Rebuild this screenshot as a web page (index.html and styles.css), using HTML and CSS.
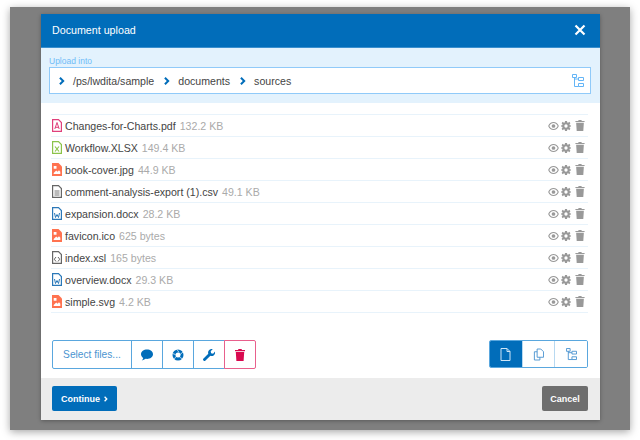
FILE: index.html
```html
<!DOCTYPE html>
<html lang="en">
<head>
    <meta charset="UTF-8">
    <title>Document upload</title>
    <link rel="stylesheet" href="styles.css">
</head>
<body>
    <svg class="sprites" width="0" height="0" aria-hidden="true">
        <defs>
            <symbol id="eye" viewBox="0 0 12 9"><path fill-rule="evenodd" d="M6 0C3.300 0 1.100 1.800 0 4.500 1.100 7.200 3.300 9 6 9s4.900-1.800 6-4.500C10.900 1.800 8.700 0 6 0zm0 1.200c1.900 0 3.700 1.300 4.700 3.300-1 2-2.800 3.300-4.700 3.300S2.300 6.500 1.300 4.500c1-2 2.800-3.300 4.700-3.300zM6 2.400a2.100 2.100 0 1 0 0 4.200 2.100 2.100 0 0 0 0-4.200z"/></symbol>
            <symbol id="gear" viewBox="0 0 12 12"><path fill-rule="evenodd" d="M4.800 0h2.400l.3 1.700 1 .4L10 1l1.300 1.700-1.100 1.300.3 1 1.500.3v1.400l-1.500.3-.3 1 1.100 1.300L10 11l-1.500-1.100-1 .4-.3 1.700H4.800l-.3-1.700-1-.4L2 11 .7 9.300 1.800 8l-.3-1L0 6.700V5.300L1.500 5l.3-1L.7 2.700 2 1l1.500 1.100 1-.4zM6 4a2 2 0 1 0 0 4 2 2 0 0 0 0-4z"/></symbol>
            <symbol id="trash" viewBox="0 0 10 12"><path d="M3.500 0h3l.5 1h3v1.300H0V1h3zM.8 3h8.400l-.6 9H1.400z"/></symbol>
            <symbol id="chev" viewBox="0 0 6 8"><path d="M1.600 0 5.600 4l-4 4L.2 6.600 2.800 4 .2 1.400z"/></symbol>
            <symbol id="tree" viewBox="0 0 12 14"><path fill="none" stroke="currentColor" d="M.5.500h4v3h-4zM6.500 3.500h5v3h-5zM6.500 9.500h5v3h-5zM2.500 3.500v9h4M2.500 5h4"/></symbol>
            <symbol id="file" viewBox="0 0 11 13"><path d="M1 .5h6l3 3v9H1z" fill="none" stroke="currentColor"/><path d="M7 .5v3h3" fill="none" stroke="currentColor"/></symbol>
            <symbol id="file-img" viewBox="0 0 10 13"><path d="M0 0h6.500L10 3.500V13H0z"/><path fill="#fff" d="M1.700 3h2.800v2.800H1.700zM1.700 10l2.500-2.500 1.300 1.300L7 7.200l1.300 1.500V11H1.700z"/></symbol>
        </defs>
    </svg>

    <div class="overlay">
        <div class="dialog">
            <header class="dialog-head">
                <span class="dialog-title">Document upload</span>
                <svg class="close-icon" viewBox="0 0 12 12"><path d="M1.500 1.500l9 9M10.500 1.500l-9 9"/></svg>
            </header>

            <section class="target">
                <label class="target-label">Upload into</label>
                <div class="path-box">
                    <svg class="crumb-icon"><use href="#chev"/></svg><span class="crumb">/ps/lwdita/sample</span>
                    <svg class="crumb-icon"><use href="#chev"/></svg><span class="crumb">documents</span>
                    <svg class="crumb-icon"><use href="#chev"/></svg><span class="crumb">sources</span>
                    <svg class="tree-icon"><use href="#tree"/></svg>
                </div>
            </section>

            <ul class="file-list">
                <li class="file-row">
                    <svg class="type-icon pdf" viewBox="0 0 10 13"><path d="M.6.600h5.900l2.900 2.900v8.900H.6z" fill="none" stroke="currentColor" stroke-width="1.200"/><path d="M5 3.500 2.800 10M5 3.500 7.200 10M3 8.300h4" fill="none" stroke="currentColor" stroke-width="1"/></svg>
                    <span class="file-name">Changes-for-Charts.pdf</span><span class="file-size">132.2 KB</span>
                    <span class="row-actions"><svg class="act-eye"><use href="#eye"/></svg><svg class="act-gear"><use href="#gear"/></svg><svg class="act-trash"><use href="#trash"/></svg></span>
                </li>
                <li class="file-row">
                    <svg class="type-icon xls" viewBox="0 0 10 13"><path d="M.6.600h5.900l2.900 2.900v8.900H.6z" fill="none" stroke="currentColor" stroke-width="1.200"/><path d="M3 5.500 7 10.500M7 5.500l-4 5" fill="none" stroke="currentColor" stroke-width="1.200"/></svg>
                    <span class="file-name">Workflow.XLSX</span><span class="file-size">149.4 KB</span>
                    <span class="row-actions"><svg class="act-eye"><use href="#eye"/></svg><svg class="act-gear"><use href="#gear"/></svg><svg class="act-trash"><use href="#trash"/></svg></span>
                </li>
                <li class="file-row">
                    <svg class="type-icon img"><use href="#file-img"/></svg>
                    <span class="file-name">book-cover.jpg</span><span class="file-size">44.9 KB</span>
                    <span class="row-actions"><svg class="act-eye"><use href="#eye"/></svg><svg class="act-gear"><use href="#gear"/></svg><svg class="act-trash"><use href="#trash"/></svg></span>
                </li>
                <li class="file-row">
                    <svg class="type-icon txt" viewBox="0 0 10 13"><path d="M.6.600h5.900l2.900 2.900v8.900H.6z" fill="none" stroke="currentColor" stroke-width="1.200"/><path d="M2.500 6h5M2.500 8h5M2.500 10h5" stroke="currentColor" stroke-width=".9"/></svg>
                    <span class="file-name">comment-analysis-export (1).csv</span><span class="file-size">49.1 KB</span>
                    <span class="row-actions"><svg class="act-eye"><use href="#eye"/></svg><svg class="act-gear"><use href="#gear"/></svg><svg class="act-trash"><use href="#trash"/></svg></span>
                </li>
                <li class="file-row">
                    <svg class="type-icon doc" viewBox="0 0 10 13"><path d="M.6.600h5.900l2.900 2.900v8.900H.6z" fill="none" stroke="currentColor" stroke-width="1.200"/><path d="M2.500 6l1 4.500L5 7.500l1.500 3 1-4.500" fill="none" stroke="currentColor" stroke-width="1"/></svg>
                    <span class="file-name">expansion.docx</span><span class="file-size">28.2 KB</span>
                    <span class="row-actions"><svg class="act-eye"><use href="#eye"/></svg><svg class="act-gear"><use href="#gear"/></svg><svg class="act-trash"><use href="#trash"/></svg></span>
                </li>
                <li class="file-row">
                    <svg class="type-icon img"><use href="#file-img"/></svg>
                    <span class="file-name">favicon.ico</span><span class="file-size">625 bytes</span>
                    <span class="row-actions"><svg class="act-eye"><use href="#eye"/></svg><svg class="act-gear"><use href="#gear"/></svg><svg class="act-trash"><use href="#trash"/></svg></span>
                </li>
                <li class="file-row">
                    <svg class="type-icon txt" viewBox="0 0 10 13"><path d="M.6.600h5.900l2.900 2.900v8.900H.6z" fill="none" stroke="currentColor" stroke-width="1.200"/><path d="M4 6 2.300 8.200 4 10.500M6 6l1.700 2.200L6 10.500" fill="none" stroke="currentColor" stroke-width="1"/></svg>
                    <span class="file-name">index.xsl</span><span class="file-size">165 bytes</span>
                    <span class="row-actions"><svg class="act-eye"><use href="#eye"/></svg><svg class="act-gear"><use href="#gear"/></svg><svg class="act-trash"><use href="#trash"/></svg></span>
                </li>
                <li class="file-row">
                    <svg class="type-icon doc" viewBox="0 0 10 13"><path d="M.6.600h5.900l2.900 2.900v8.900H.6z" fill="none" stroke="currentColor" stroke-width="1.200"/><path d="M2.500 6l1 4.500L5 7.500l1.500 3 1-4.500" fill="none" stroke="currentColor" stroke-width="1"/></svg>
                    <span class="file-name">overview.docx</span><span class="file-size">29.3 KB</span>
                    <span class="row-actions"><svg class="act-eye"><use href="#eye"/></svg><svg class="act-gear"><use href="#gear"/></svg><svg class="act-trash"><use href="#trash"/></svg></span>
                </li>
                <li class="file-row">
                    <svg class="type-icon img"><use href="#file-img"/></svg>
                    <span class="file-name">simple.svg</span><span class="file-size">4.2 KB</span>
                    <span class="row-actions"><svg class="act-eye"><use href="#eye"/></svg><svg class="act-gear"><use href="#gear"/></svg><svg class="act-trash"><use href="#trash"/></svg></span>
                </li>
            </ul>

            <div class="toolbar">
                <div class="btn-group">
                    <button class="tool-btn select-btn">Select files...</button>
                    <button class="tool-btn"><svg class="tool-icon" viewBox="0 0 12 11"><path d="M6 0c3.300 0 6 2 6 4.700S9.300 9.400 6 9.400c-.5 0-1 0-1.400-.1C3.500 10.200 2.200 10.800.8 11c.8-.8 1.300-1.700 1.400-2.600C.9 7.500 0 6.200 0 4.700 0 2 2.700 0 6 0z"/></svg></button>
                    <button class="tool-btn"><svg class="tool-icon" viewBox="0 0 12 12"><circle class="ring" cx="6" cy="6" r="4"/><path class="ring-cut" d="M5 .5 7 3.500M11 3 8 5.500M10.500 10 7.500 8M2 10.500 4 7.500M.5 4.500 3.500 5.500"/></svg></button>
                    <button class="tool-btn"><svg class="tool-icon" viewBox="0 0 12 12"><path d="M8.800 0c.4 0 .7 0 1 .1L7.700 2.300l.4 2 2 .4L12 2.600c.1.300.1.600.1.900a3.500 3.500 0 0 1-4.700 3.300L2.500 11.600a1.300 1.300 0 0 1-2-2l4.800-4.900A3.500 3.500 0 0 1 8.800 0z"/></svg></button>
                    <button class="tool-btn danger-btn"><svg class="tool-icon" viewBox="0 0 10 12"><use href="#trash"/></svg></button>
                </div>
                <div class="view-group">
                    <button class="view-btn active"><svg class="view-icon" viewBox="0 0 11 13"><use href="#file"/></svg></button>
                    <button class="view-btn"><svg class="view-icon" viewBox="0 0 12 13"><path d="M4.500.5h4l3 3v6h-7zM4.500 3.500h-3v9h6v-3" fill="none" stroke="currentColor"/></svg></button>
                    <button class="view-btn"><svg class="view-icon" viewBox="0 0 12 14"><use href="#tree"/></svg></button>
                </div>
            </div>

            <footer class="dialog-foot">
                <button class="foot-btn continue-btn">Continue<svg class="continue-icon"><use href="#chev"/></svg></button>
                <button class="foot-btn cancel-btn">Cancel</button>
            </footer>
        </div>
    </div>
</body>
</html>
```

FILE: styles.css
```css
/* Page and backdrop */
* {
    box-sizing: border-box;
}

html, body {
    height: 100%;
}

body {
    margin: 0;
    padding: 7px 10px 10px;
    background-color: #ffffff;
    font-family: "Liberation Sans", Arial, sans-serif;
    font-size: 11px;
    color: #444444;
}

.sprites {
    display: block;
    height: 0;
}

.overlay {
    height: 423px;
    padding: 7px 30px 10px 31px;
    background-color: #7f7f7f;
    box-shadow: 0 2px 8px rgba(0, 0, 0, 0.35);
}

.dialog {
    height: 406px;
    display: flex;
    flex-direction: column;
    background-color: #ffffff;
    box-shadow: 0 1px 4px rgba(0, 0, 0, 0.3);
}

/* Header */
.dialog-head {
    height: 34px;
    flex: none;
    display: flex;
    justify-content: space-between;
    align-items: center;
    padding: 0 14px 1px 11px;
    background-color: #016dba;
    border-bottom: 1px solid #3a8fce;
    color: #ffffff;
}

.dialog-title {
    font-size: 10.7px;
}

.close-icon {
    width: 12px;
    height: 12px;
    fill: none;
    stroke: #ffffff;
    stroke-width: 2.2;
}

/* Upload target */
.target {
    height: 55px;
    flex: none;
    padding: 8px 9px 0 8px;
    background-color: #e3f2fd;
}

.target-label {
    display: block;
    height: 11px;
    font-size: 8.500px;
    line-height: 10px;
    color: #6fbcf8;
}

.path-box {
    height: 27px;
    display: flex;
    align-items: center;
    padding: 0 6px 0 9px;
    background-color: #ffffff;
    border: 1px solid #90caf9;
}

.crumb-icon {
    width: 6px;
    height: 8px;
    flex: none;
    fill: #016dba;
}

.crumb {
    margin: 0 10px 0 8px;
    font-size: 10.600px;
    color: #444444;
}

.tree-icon {
    width: 12px;
    height: 14px;
    margin-left: auto;
    color: #64b5f6;
}

/* File list */
.file-list {
    flex: none;
    height: 237px;
    list-style: none;
    margin: 0;
    padding: 11px 12px 0 10px;
}

.file-row {
    height: 22px;
    display: flex;
    align-items: center;
    border-top: 1px solid #e8f3fb;
}

.file-row:last-child {
    height: 23px;
    border-bottom: 1px solid #e8f3fb;
}

.type-icon {
    width: 10px;
    height: 13px;
    flex: none;
    margin: 0 3px 0 1px;
}

.type-icon.pdf { color: #e0407b; }
.type-icon.xls { color: #8bc34a; }
.type-icon.img { fill: #ff7350; }
.type-icon.txt { color: #666666; }
.type-icon.doc { color: #2b78b8; }

.file-name {
    font-size: 10.600px;
    color: #444444;
}

.file-size {
    margin-left: 4px;
    font-size: 10.600px;
    color: #aaaaaa;
}

.row-actions {
    margin-left: auto;
    margin-right: 3px;
    display: flex;
    align-items: center;
    gap: 2px;
    fill: #999999;
}

.act-eye {
    width: 11px;
    height: 8px;
}

.act-gear {
    width: 10px;
    height: 10px;
}

.act-trash {
    width: 10px;
    height: 11px;
    margin-left: 2px;
}

/* Toolbars */
.toolbar {
    flex: none;
    height: 38px;
    display: flex;
    justify-content: space-between;
    align-items: flex-start;
    padding: 0 12px 0 11px;
}

.btn-group, .view-group {
    display: flex;
}

.tool-btn {
    width: 32px;
    height: 29px;
    margin-left: -1px;
    padding: 0;
    display: flex;
    justify-content: center;
    align-items: center;
    background-color: #ffffff;
    border: 1px solid #5aa7de;
    color: #016dba;
    fill: #016dba;
}

.select-btn {
    width: 80px;
    margin-left: 0;
    border-radius: 2px 0 0 2px;
    font-family: inherit;
    font-size: 10.200px;
    color: #4a94d0;
}

.danger-btn {
    border-color: #e8608c;
    border-radius: 0 2px 2px 0;
    fill: #d9094f;
}

.tool-icon {
    width: 12px;
    height: 12px;
}

.ring {
    fill: none;
    stroke: #016dba;
    stroke-width: 3;
}

.ring-cut {
    fill: none;
    stroke: #ffffff;
    stroke-width: 0.7;
}

.view-group {
    width: 99px;
    height: 28px;
    border: 1px solid #5aa7de;
    border-radius: 2px;
    overflow: hidden;
}

.view-btn {
    flex: 1;
    padding: 0;
    display: flex;
    justify-content: center;
    align-items: center;
    background-color: #ffffff;
    border: none;
    border-left: 1px solid #b8d9f1;
    color: #4a94d0;
}

.view-btn:first-child {
    border-left: none;
}

.view-btn.active {
    background-color: #016dba;
    color: #cfe6f7;
}

.view-icon {
    width: 11px;
    height: 13px;
}

/* Footer */
.dialog-foot {
    flex: 1;
    display: flex;
    justify-content: space-between;
    padding: 8px 12px 0 11px;
    background-color: #ececec;
}

.foot-btn {
    height: 25px;
    padding: 0;
    border: none;
    border-radius: 2px;
    font-family: inherit;
    font-size: 9px;
    font-weight: bold;
    color: #ffffff;
}

.continue-btn {
    width: 65px;
    background-color: #016dba;
}

.continue-icon {
    width: 4px;
    height: 6px;
    margin-left: 4px;
    fill: #ffffff;
}

.cancel-btn {
    width: 46px;
    background-color: #6e6e6e;
}
```
